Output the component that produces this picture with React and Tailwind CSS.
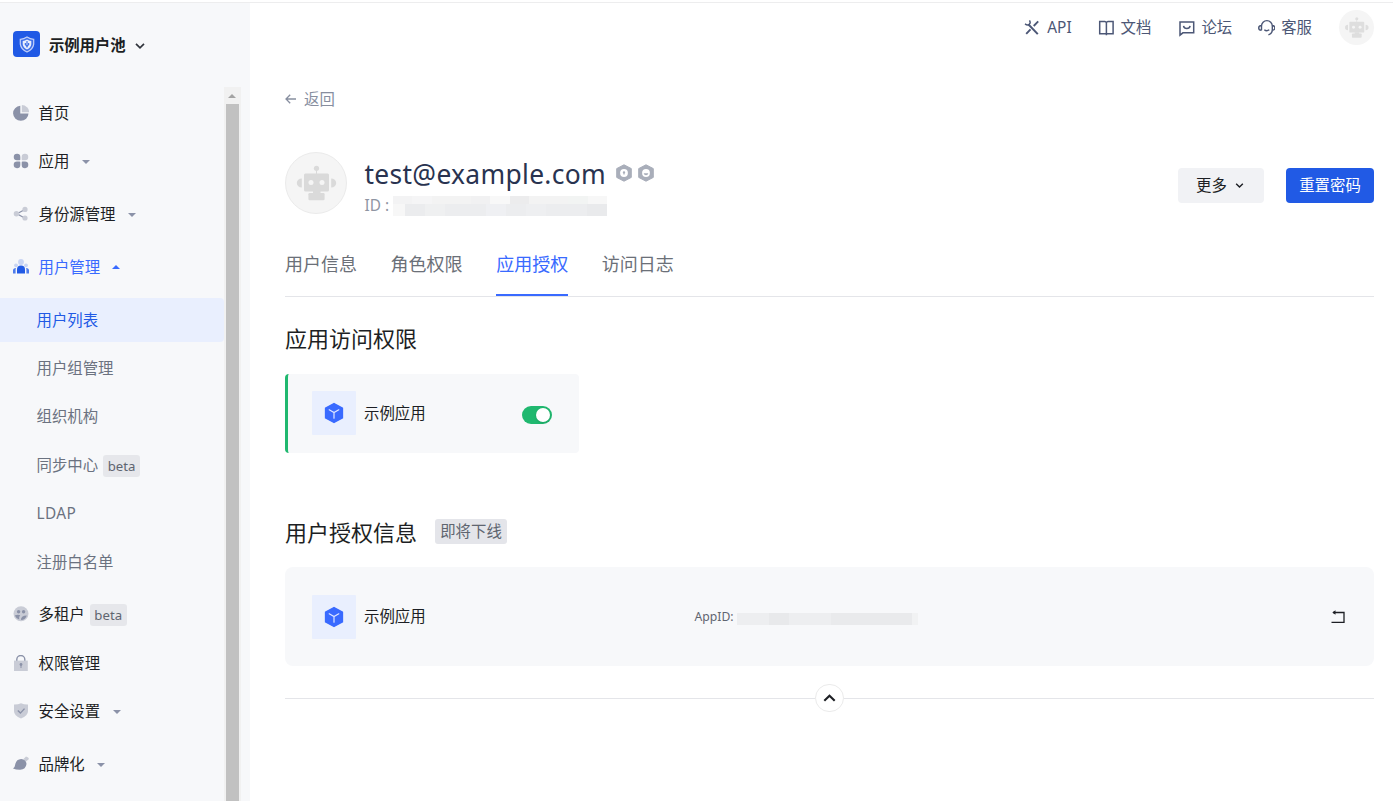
import React from "react";

const Robot = ({ className }) => (
  <svg viewBox="0 0 62 62" className={className} fill="currentColor">
    <circle cx="31.5" cy="16.3" r="2.6" />
    <rect x="31" y="17" width="1" height="6" />
    <rect x="19" y="21.5" width="25" height="18" rx="1.5" />
    <path d="M16.8 26.5a5 4.5 0 0 0 0 9zM46.2 26.5a5 4.5 0 0 1 0 9z" />
    <rect x="28" y="39" width="7.5" height="3.5" />
    <rect x="23.4" y="41" width="16.2" height="7.2" rx="1.2" />
    <circle cx="26" cy="30.5" r="2.5" fill="#f5f5f5" />
    <circle cx="37" cy="30.5" r="2.5" fill="#f5f5f5" />
  </svg>
);

const D = "#8b92a8";
const L = "#c9ccd6";

const icons = {
  home: (
    <>
      <path d="M7.3 .8v7.700h8.200A7.7 7.500 0 1 1 7.3 .8z" fill={D} />
      <path d="M8.800 0a7.600 7.600 0 0 1 7.500 7.300H8.800z" fill={L} />
    </>
  ),
  apps: (
    <>
      <path d="M4 .8a3.200 3.200 0 0 1 3.300 3.200v2.500q0 .8-.8.800H4A3.200 3.200 0 0 1 4 .8z" fill={D} />
      <path d="M12 .8a3.200 3.200 0 0 1 0 6.500H9.500q-.8 0-.8-.8V4A3.200 3.200 0 0 1 12 .8z" fill={L} />
      <path d="M4 8.600h2.500q.8 0 .8.800V12A3.300 3.300 0 1 1 4 8.600z" fill={D} />
      <path d="M12 8.600a3.300 3.300 0 1 1-3.300 3.400V9.400q0-.8.8-.8z" fill={D} />
    </>
  ),
  share: (
    <>
      <path d="M11.500 3.800L4 7.700l7.500 4.200" fill="none" stroke={D} strokeWidth="1.200" />
      <circle cx="3.400" cy="7.700" r="2.700" fill={L} />
      <circle cx="12" cy="3.400" r="2.600" fill={L} />
      <circle cx="12" cy="12" r="2.600" fill={L} />
    </>
  ),
  users: (
    <>
      <circle cx="8" cy="3" r="2.900" fill="#c8d5f3" />
      <circle cx="3" cy="6.300" r="1.900" fill="#c8d5f3" />
      <circle cx="13" cy="6.300" r="1.900" fill="#c8d5f3" />
      <path d="M4 14.500v-4a4 4 0 0 1 8 0v4z" fill="#215ae5" />
      <path d="M0 14.500v-3.200Q0 9.100 3 8.900 2.600 9.800 2.600 10.800v3.700zM16 14.500v-3.200q0-2.200-3-2.400.4.900.4 1.900v3.700z" fill="#4f7ceb" />
    </>
  ),
  tenant: (
    <>
      <circle cx="8" cy="7.700" r="7.500" fill={L} />
      <circle cx="5.600" cy="5.800" r="1.700" fill={D} />
      <circle cx="10.600" cy="5.800" r="1.700" fill={D} />
      <path d="M1.800 9.500Q5 8.200 7.200 9.300q-1.500 1.500-1 4.200Q3 12.500 1.800 9.500zM8 14q-.4-4.400 5.800-4.600Q12.700 13.500 8 14z" fill={D} />
    </>
  ),
  lock: (
    <>
      <path d="M3.800 6V4.500a4 4 0 0 1 8 0V6" fill="none" stroke={D} strokeWidth="1.400" />
      <rect x="1" y="5.600" width="13.800" height="10.400" fill={L} />
      <circle cx="8" cy="9.500" r="1.400" fill={D} />
      <rect x="7.500" y="10" width="1" height="3" fill={D} />
    </>
  ),
  shield: (
    <>
      <path d="M8 .3q3 1.300 7 1.200v6.700q0 4.600-7 7.300Q1 12.800 1 8.200V1.500Q5 1.600 8 .3z" fill={L} />
      <path d="M4.800 7.600l2.600 2.500 4.100-4.500" fill="none" stroke={D} strokeWidth="1.400" />
    </>
  ),
  brand: (
    <>
      <path d="M10.500 3l2.500-2.500q2.800.5 3 2.500l-3 2.500z" fill={L} />
      <path d="M0 12.500q2-1.200 2.200-4Q3.200 3.200 8.200 3q5 .3 5.300 5-.7 5.500-6.300 5.800Q3 13.900 0 12.500z" fill={D} />
    </>
  ),
};

const Caret = ({ up }) => (
  <svg viewBox="0 0 8 4" className={up ? "ml-[12px] h-[4px] w-[8px] rotate-180 text-[#396aff]" : "ml-[12.500px] h-[4px] w-[8px] text-[#8b92a8]"}>
    <path d="M0 0h8L4 4z" fill="currentColor" />
  </svg>
);

const Beta = () => (
  <span className="ml-[5px] mt-px flex h-[22px] w-[37px] items-center justify-center rounded-[3px] bg-[#e6e7eb] text-[13.200px] text-[#5f6570]">beta</span>
);

const Item = ({ icon, label, beta, caret, up, gap }) => (
  <a className={`flex h-[44px] items-center pl-[13px] ${gap ? "mt-[8.800px]" : "mt-[4.400px]"} ${up ? "text-[#396aff]" : "text-[#1d1f24]"}`}>
    <svg viewBox="0 0 16 16" className="mr-[9.500px] mb-px h-[16px] w-[16px] shrink-0">{icons[icon]}</svg>
    <span className="pt-px">{label}</span>
    {beta && <Beta />}
    {caret && <Caret up={up} />}
  </a>
);

const Sub = ({ label, active, beta, gap }) => (
  <a className={`flex h-[44px] items-center pl-[36.500px] ${gap ? "mt-[8.800px]" : "mt-[4.400px]"} ${active ? "rounded-r-[4px] bg-[#e9effe] text-[#215ae5]" : "text-[#6b7280]"}`}>
    <span className={label === "LDAP" ? "tracking-[0.400px]" : "pt-px"}>{label}</span>
    {beta && <Beta />}
  </a>
);

const Chevron = ({ className, width = 1.5 }) => (
  <svg viewBox="0 0 10 6" className={className} fill="none" stroke="currentColor" strokeWidth={width}>
    <path d="M1 .8l4 4 4-4" />
  </svg>
);

const TopLink = ({ label, children, className }) => (
  <a className={`flex items-center ${className || ""}`}>
    <svg viewBox="0 0 18 18" className="mr-[6px] h-[18px] w-[18px]" fill="none" stroke="#4c5776" strokeWidth="1.500">{children}</svg>
    <span className={label === "API" ? "" : "pt-px"}>{label}</span>
  </a>
);

const AppLogo = () => (
  <div className="flex h-[44px] w-[44px] shrink-0 items-center justify-center rounded-[1px] bg-[#e9effe]">
    <svg viewBox="0 0 20 22" className="mr-px h-[22px] w-[20px]">
      <path d="M10 1.600l8.400 4.500v9.800L10 20.400 1.600 15.900V6.100z" fill="#396aff" stroke="#396aff" strokeWidth="1.500" strokeLinejoin="round" />
      <path d="M5.200 7.800L10 10.600l4.800-2.800M10 10.600v5.600" fill="none" stroke="#dfe7ff" strokeWidth="1.200" strokeLinecap="round" />
    </svg>
  </div>
);

const Hex = ({ smile }) => (
  <svg viewBox="0 0 16 18" className="h-[18px] w-[16px]">
    <path d="M8 .8l7.300 3.800v8.800L8 17.200.7 13.400V4.600z" fill="#a9aeba" stroke="#a9aeba" strokeLinejoin="round" />
    <circle cx="8" cy="9" r="3.900" fill="#fff" />
    {smile ? (
      <path d="M5.700 9.200h4.600q-.3 2.100-2.300 2.100T5.700 9.200z" fill="#a9aeba" />
    ) : (
      <path d="M6.800 8.500a1.200 1.200 0 0 1 2.400 0q0 .7-.6 1v1H7.400v-1q-.6-.3-.6-1z" fill="#a9aeba" />
    )}
  </svg>
);

const idTop = ["bg-[#f3f3f4]", "bg-[#f5f5f6]", "bg-[#f3f3f3]", "bg-[#f3f3f3]", "bg-[#f1f1f2]", "bg-[#f8f8f8]", "bg-[#ececed]", "bg-[#f3f3f3]", "bg-[#f3f3f3]", "bg-[#f2f4f3]", "bg-[#f7f7f7]"];
const idBottom = ["bg-[#ebecee]", "bg-[#eff0f1]", "bg-[#ecedef]", "bg-[#ecedef]", "bg-[#eff0f3]", "bg-[#ecedef]", "bg-[#eeeff1]", "bg-[#ecedef]", "bg-[#ecedef]", "bg-[#e9eaec]"];

const tabs = ["用户信息", "角色权限", "应用授权", "访问日志"];

export default function App() {
  return (
    <div className="flex h-[801px] w-[1393px] flex-col overflow-hidden bg-white font-['Noto_Sans','Noto_Sans_CJK_SC',sans-serif] text-[15.400px] leading-[22px] text-[#1d1f24]">
      <div className="mt-[2px] h-px shrink-0 bg-[#ededee]" />
      <div className="flex min-h-0 flex-1">
        <aside className="flex w-[250px] shrink-0 flex-col bg-[#f7f8fa]">
          <div className="flex h-[84px] shrink-0 items-center pl-[13px]">
            <div className="mb-[2px] flex h-[26px] w-[27px] items-center justify-center rounded-[4px] bg-[#215ae5]">
              <svg viewBox="0 0 16 17" className="h-[17px] w-[16px]" fill="none">
                <path d="M8 1q3 2 6.700 2.300v4.900Q14 13.500 8 16 2 13.500 1.300 8.200V3.300Q5 3 8 1z" fill="#3f70ea" stroke="#c3d1f9" strokeWidth="1.200" />
                <path d="M8 3.400q2 1.300 4.300 1.500v3.300q-.3 3.300-4.300 5.200-4-1.900-4.300-5.200V4.900Q6 4.700 8 3.400z" fill="#e8eefd" />
                <path d="M8 5v6.500M6.300 7v2l1.700 1.200L9.700 9V7" stroke="#215ae5" strokeWidth="1" />
              </svg>
            </div>
            <span className="ml-[9px] mt-[2px] font-bold tracking-[-0.100px]">示例用户池</span>
            <Chevron className="ml-[10px] mt-[2px] h-[6px] w-[10px] text-[#30343c]" width={1.7} />
          </div>
          <div className="flex min-h-0 flex-1">
            <nav className="h-full w-[224px] overflow-hidden">
              <Item icon="home" label="首页" />
              <Item icon="apps" label="应用" caret />
              <Item icon="share" label="身份源管理" caret gap />
              <Item icon="users" label="用户管理" caret up gap />
              <Sub label="用户列表" active gap />
              <Sub label="用户组管理" />
              <Sub label="组织机构" />
              <Sub label="同步中心" beta />
              <Sub label="LDAP" />
              <Sub label="注册白名单" />
              <Item icon="tenant" label="多租户" beta gap />
              <Item icon="lock" label="权限管理" />
              <Item icon="shield" label="安全设置" caret />
              <Item icon="brand" label="品牌化" caret gap />
            </nav>
            <div className="flex w-[17px] flex-col items-center bg-[#f1f1f1]">
              <div className="flex h-[17px] items-center">
                <svg viewBox="0 0 8 4" className="mr-px mt-px h-[4px] w-[8px]"><path d="M0 4h8L4 0z" fill="#a3a3a3" /></svg>
              </div>
              <div className="w-[13px] flex-1 bg-[#c1c1c1]" />
            </div>
          </div>
        </aside>

        <main className="flex min-w-0 flex-1 flex-col pl-[35px] pr-[19px]">
          <header className="flex h-[49px] shrink-0 items-center justify-end text-[#4c5776]">
            <TopLink label="API">
              <path d="M5.500 5.500l9.300 9.600" strokeWidth="2" />
              <path d="M15.200 2.400L10.700 7M7.500 10.300L3.200 14.800" strokeWidth="1.900" />
              <path d="M2 4.900q2.600 1.900 4.300.4t.2-4" strokeWidth="1.400" />
            </TopLink>
            <TopLink label="文档" className="ml-[25px]">
              <path d="M2.700 2.500h5.200Q9.400 2.600 9.400 4v12.200-1.500H2.700zM16.100 2.500h-5.200Q9.400 2.600 9.400 4v10.700h6.700z" />
            </TopLink>
            <TopLink label="论坛" className="ml-[26px]">
              <path d="M3 2.900h13.700v10.900H5.900L3 16.200z" />
              <path d="M6.500 6.900q.5 2.600 3.300 2.600t3.300-2.600" />
            </TopLink>
            <TopLink label="客服" className="ml-[25px]">
              <path d="M4.500 11.300V7a5.400 5.400 0 0 1 10.800 0v3.800q0 3.800-3.900 5M4.500 6.500q-2.800.2-2.800 2.400t2.800 2.400M15.300 6.500q2.600.2 2.600 2.400t-2.600 2.400M7.300 10.700q2.400 2 5 0" strokeWidth="1.400" />
            </TopLink>
            <div className="ml-[27px] flex h-[35px] w-[35px] items-center justify-center rounded-full bg-[#f5f5f5] text-[#dedede]">
              <Robot className="h-[37px] w-[37px] shrink-0" />
            </div>
          </header>

          <div className="mt-[36px] flex h-[22px] items-center text-[#878e9f]">
            <svg viewBox="0 0 11 10" className="mb-px h-[10px] w-[11px]" fill="none" stroke="currentColor" strokeWidth="1.300"><path d="M11 5H1M5.200 .7L1 5l4.200 4.300" /></svg>
            <span className="ml-[8px] pt-[2px]">返回</span>
          </div>

          <section className="mt-[42px] flex h-[68px]">
            <div className="h-[62px] w-[62px] shrink-0 rounded-full border border-[#ebebeb] bg-[#f5f5f5] text-[#dadada]">
              <Robot className="-ml-px -mt-px h-[62px] w-[62px]" />
            </div>
            <div className="ml-[17.500px]">
              <div className="mt-[3px] flex h-[38px] items-center">
                <span className="text-[26.400px] leading-[38px] tracking-[0.320px] text-[#293350]">test@example.com</span>
                <div className="mb-[2px] ml-[10px] flex gap-[6px]"><Hex /><Hex smile /></div>
              </div>
              <div className="mt-[2px] flex h-[22px] items-center text-[#8f95a3]">
                <span className="w-[28.500px] whitespace-nowrap">ID :</span>
                <div className="w-[214px]">
                  <div className="flex h-[8px]">{idTop.map((c, i) => <i key={i} className={`flex-1 ${c}`} />)}</div>
                  <div className="flex h-[12px]"><i className="w-[12px] bg-[#f7f7f7]" />{idBottom.map((c, i) => <i key={i} className={`flex-1 ${c}`} />)}</div>
                </div>
              </div>
            </div>
            <div className="ml-auto mt-[16px] flex h-[35px] gap-[22px]">
              <button className="flex w-[86px] items-center justify-center rounded-[4px] bg-[#f1f2f5] pr-[2px]">
                更多<Chevron className="ml-[8px] h-[5px] w-[9px]" width={1.7} />
              </button>
              <button className="w-[88px] rounded-[4px] bg-[#215ae5] text-white">重置密码</button>
            </div>
          </section>

          <div className="mt-[28px] flex h-[49px] shrink-0 gap-[33.600px] border-b border-[#e4e5e9] text-[18px] leading-[33px] text-[#6b7078]">
            {tabs.map((t) => (
              <div key={t} className={t === "应用授权" ? "h-[48px] w-[72px] border-b-2 border-[#396aff] text-[#396aff]" : "h-[48px] w-[72px]"}>{t}</div>
            ))}
          </div>

          <h2 className="mt-[25px] h-[32px] text-[22px] leading-[32px]">应用访问权限</h2>
          <div className="mt-[20px] flex h-[79px] w-[294px] shrink-0 rounded-[4px] border-l-[3px] border-[#20b86f] bg-[#f7f8fa] pl-[24px] pr-[27px] pt-[17px]">
            <AppLogo />
            <span className="ml-[8px] mt-[12px]">示例应用</span>
            <div className="ml-auto mt-[15px] flex h-[18px] w-[30px] items-center justify-end rounded-full bg-[#20b86f] pr-[2px]">
              <div className="h-[14px] w-[14px] rounded-full bg-white shadow-sm" />
            </div>
          </div>

          <div className="mt-[63px] flex h-[34px] items-center">
            <h2 className="w-[132px] whitespace-nowrap pb-[2px] text-[22px] leading-[32px]">用户授权信息</h2>
            <span className="mb-[3px] ml-[18px] flex h-[25px] w-[72px] items-center justify-center rounded-[3px] bg-[#e4e5ea] text-[#5f6570]">即将下线</span>
          </div>
          <div className="mt-[17px] flex h-[99px] shrink-0 items-center rounded-[8px] bg-[#f7f8fa] pl-[27px] pr-[29px]">
            <AppLogo />
            <span className="ml-[8px] w-[330.500px] pt-px">示例应用</span>
            <span className="w-[42.500px] whitespace-nowrap pt-px text-[12.200px] text-[#5f6570]">AppID:</span>
            <div className="mt-[4px] flex h-[12px] w-[181px] bg-[#eeeff1]">
              <i className="w-[32px] bg-[#edeef0]" /><i className="w-[20px] bg-[#e8e9eb]" /><i className="w-[42px] bg-[#edeef0]" /><i className="w-[81px] bg-[#e9eaec]" /><i className="w-[6px] bg-[#f1f2f3]" />
            </div>
            <svg viewBox="0 0 14 13" className="ml-auto h-[13px] w-[14px]" fill="none" stroke="#1d1f24" strokeWidth="1.300">
              <path d="M2 2.500h11v9.800H.5" />
              <path d="M4.500 .2v4.600L1.300 2.500z" fill="#1d1f24" stroke="none" />
            </svg>
          </div>

          <div className="mt-[18px] flex h-[28px] shrink-0 items-center">
            <div className="h-px flex-1 bg-[#e4e5e9]" />
            <div className="flex h-[28px] w-[29px] items-center justify-center rounded-full border border-[#ebebeb] bg-white">
              <Chevron className="h-[8px] w-[13px] rotate-180" width={1.6} />
            </div>
            <div className="h-px flex-1 bg-[#e4e5e9]" />
          </div>
        </main>
      </div>
    </div>
  );
}
